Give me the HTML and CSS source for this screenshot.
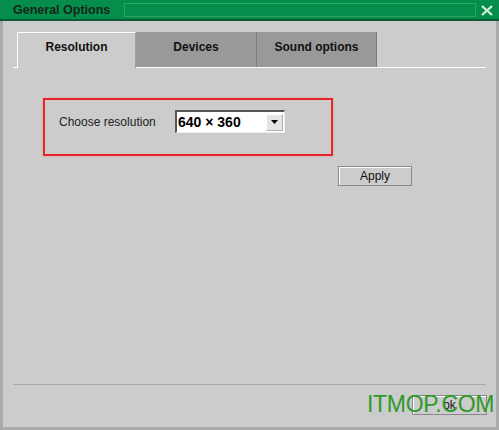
FILE: index.html
```html
<!DOCTYPE html>
<html lang="en">
<head>
    <meta charset="UTF-8">
    <title>General Options</title>
    <link rel="stylesheet" href="styles.css">
</head>
<body>
    <div class="window">
        <div class="titlebar">
            <span class="title">General Options</span>
            <div class="title-field"></div>
            <svg class="close" width="12" height="11" viewBox="0 0 12 11">
                <path d="M1 1 L11 10 M11 1 L1 10" stroke="#d9f2df" stroke-width="2.2" fill="none"/>
            </svg>
        </div>

        <div class="frame">
            <div class="tabs">
                <div class="tab active">Resolution</div>
                <div class="tab">Devices</div>
                <div class="tab">Sound options</div>
            </div>

            <div class="panel">
                <div class="res-box">
                    <span class="res-label">Choose resolution</span>
                    <div class="select">
                        <span class="select-value">640 × 360</span>
                        <span class="select-btn">
                            <svg width="7" height="4" viewBox="0 0 7 4"><path d="M0 0 H7 L3.5 4 Z" fill="#000"/></svg>
                        </span>
                    </div>
                </div>
                <div class="apply-row">
                    <button class="btn apply">Apply</button>
                </div>
            </div>

            <div class="footer">
                <div class="separator"></div>
                <div class="ok-row">
                    <button class="btn ok">ok</button>
                </div>
            </div>
        </div>

        <div class="watermark">ITMOP.COM</div>
    </div>
</body>
</html>
```

FILE: styles.css
```css
body {
    margin: 0;
    padding: 0;
    font-family: "Liberation Sans", Arial, sans-serif;
    font-size: 12px;
    color: #111;
    background-color: #aaaaaa;
}
.window {
    position: relative;
    width: 499px;
    height: 430px;
    display: flex;
    flex-direction: column;
    overflow: hidden;
}
.titlebar {
    height: 19px;
    background-color: #048d4b;
    border-bottom: 2px solid #0b5a31;
    display: flex;
    align-items: center;
    padding-left: 13px;
    padding-right: 6px;
}
.title {
    font-weight: bold;
    font-size: 12.5px;
    color: #15251a;
    width: 111px;
}
.title-field {
    flex: 1;
    height: 12px;
    border: 1px solid #2fa565;
    margin-top: 1px;
}
.close {
    margin-left: 5px;
    margin-top: 2px;
}
.frame {
    flex: 1;
    background-color: #cccccc;
    border-left: 3px solid #aaaaaa;
    border-right: 3px solid #aaaaaa;
    border-bottom: 3px solid #aaaaaa;
    display: flex;
    flex-direction: column;
}
.tabs {
    display: flex;
    margin: 11px 10px 0 10px;
    padding-left: 4px;
    border-bottom: 1px solid #ffffff;
}
.tab {
    height: 35px;
    box-sizing: border-box;
    display: flex;
    align-items: center;
    justify-content: center;
    font-weight: bold;
    font-size: 12px;
    color: #111;
    background-color: #999999;
    border-right: 1px solid #7c7c7c;
    padding-bottom: 6px;
}
.tab:nth-child(1) {
    width: 119px;
}
.tab:nth-child(2) {
    width: 121px;
}
.tab:nth-child(3) {
    width: 120px;
}
.tab.active {
    background-color: #cccccc;
    border-top: 1px solid #ffffff;
    border-left: 1px solid #ffffff;
    border-right: 1px solid #a0a0a0;
    border-top-left-radius: 2px;
    margin-bottom: -1px;
    height: 36px;
    padding-bottom: 7px;
}
.panel {
    display: flex;
    flex-direction: column;
    padding-left: 40px;
}
.res-box {
    width: 290px;
    height: 58px;
    box-sizing: border-box;
    margin-top: 30px;
    border: 2px solid #e8242a;
    box-shadow: 0 0 1px #f07070;
    display: flex;
    align-items: flex-start;
    padding-top: 10px;
    padding-left: 14px;
}
.res-label {
    width: 116px;
    margin-top: 5px;
    font-size: 12px;
    color: #222;
}
.select {
    width: 110px;
    height: 23px;
    box-sizing: border-box;
    background-color: #ffffff;
    border-top: 2px solid #555555;
    border-left: 2px solid #555555;
    border-right: 1px solid #eeeeee;
    border-bottom: 1px solid #eeeeee;
    display: flex;
    align-items: center;
    padding-left: 1px;
}
.select-value {
    flex: 1;
    font-weight: bold;
    font-size: 14px;
    color: #000;
}
.select-btn {
    width: 17px;
    height: 17px;
    box-sizing: border-box;
    margin-right: 1px;
    background-color: #e4e4e4;
    border: 1px solid #b0b0b0;
    border-top-color: #ffffff;
    border-left-color: #ffffff;
    display: flex;
    align-items: center;
    justify-content: center;
}
.apply-row {
    display: flex;
    justify-content: flex-end;
    margin-top: 10px;
    padding-right: 84px;
}
.btn {
    width: 74px;
    height: 20px;
    box-sizing: border-box;
    background-color: #cccccc;
    border: 1px solid #888888;
    box-shadow: inset 1px 1px 0 #ffffff;
    font-family: "Liberation Sans", Arial, sans-serif;
    font-size: 12px;
    color: #111;
    padding: 0;
}
.footer {
    margin-top: auto;
    padding-bottom: 12px;
}
.separator {
    margin: 0 10px;
    border-top: 1px solid #a8a8a8;
}
.ok-row {
    display: flex;
    justify-content: flex-end;
    margin-top: 10px;
    padding-right: 9px;
}
.btn.ok {
    width: 75px;
}
.watermark {
    position: absolute;
    left: 367px;
    top: 391px;
    font-family: "Liberation Sans", Arial, sans-serif;
    font-size: 23px;
    color: #2e9a2a;
    letter-spacing: -0.3px;
}
```
